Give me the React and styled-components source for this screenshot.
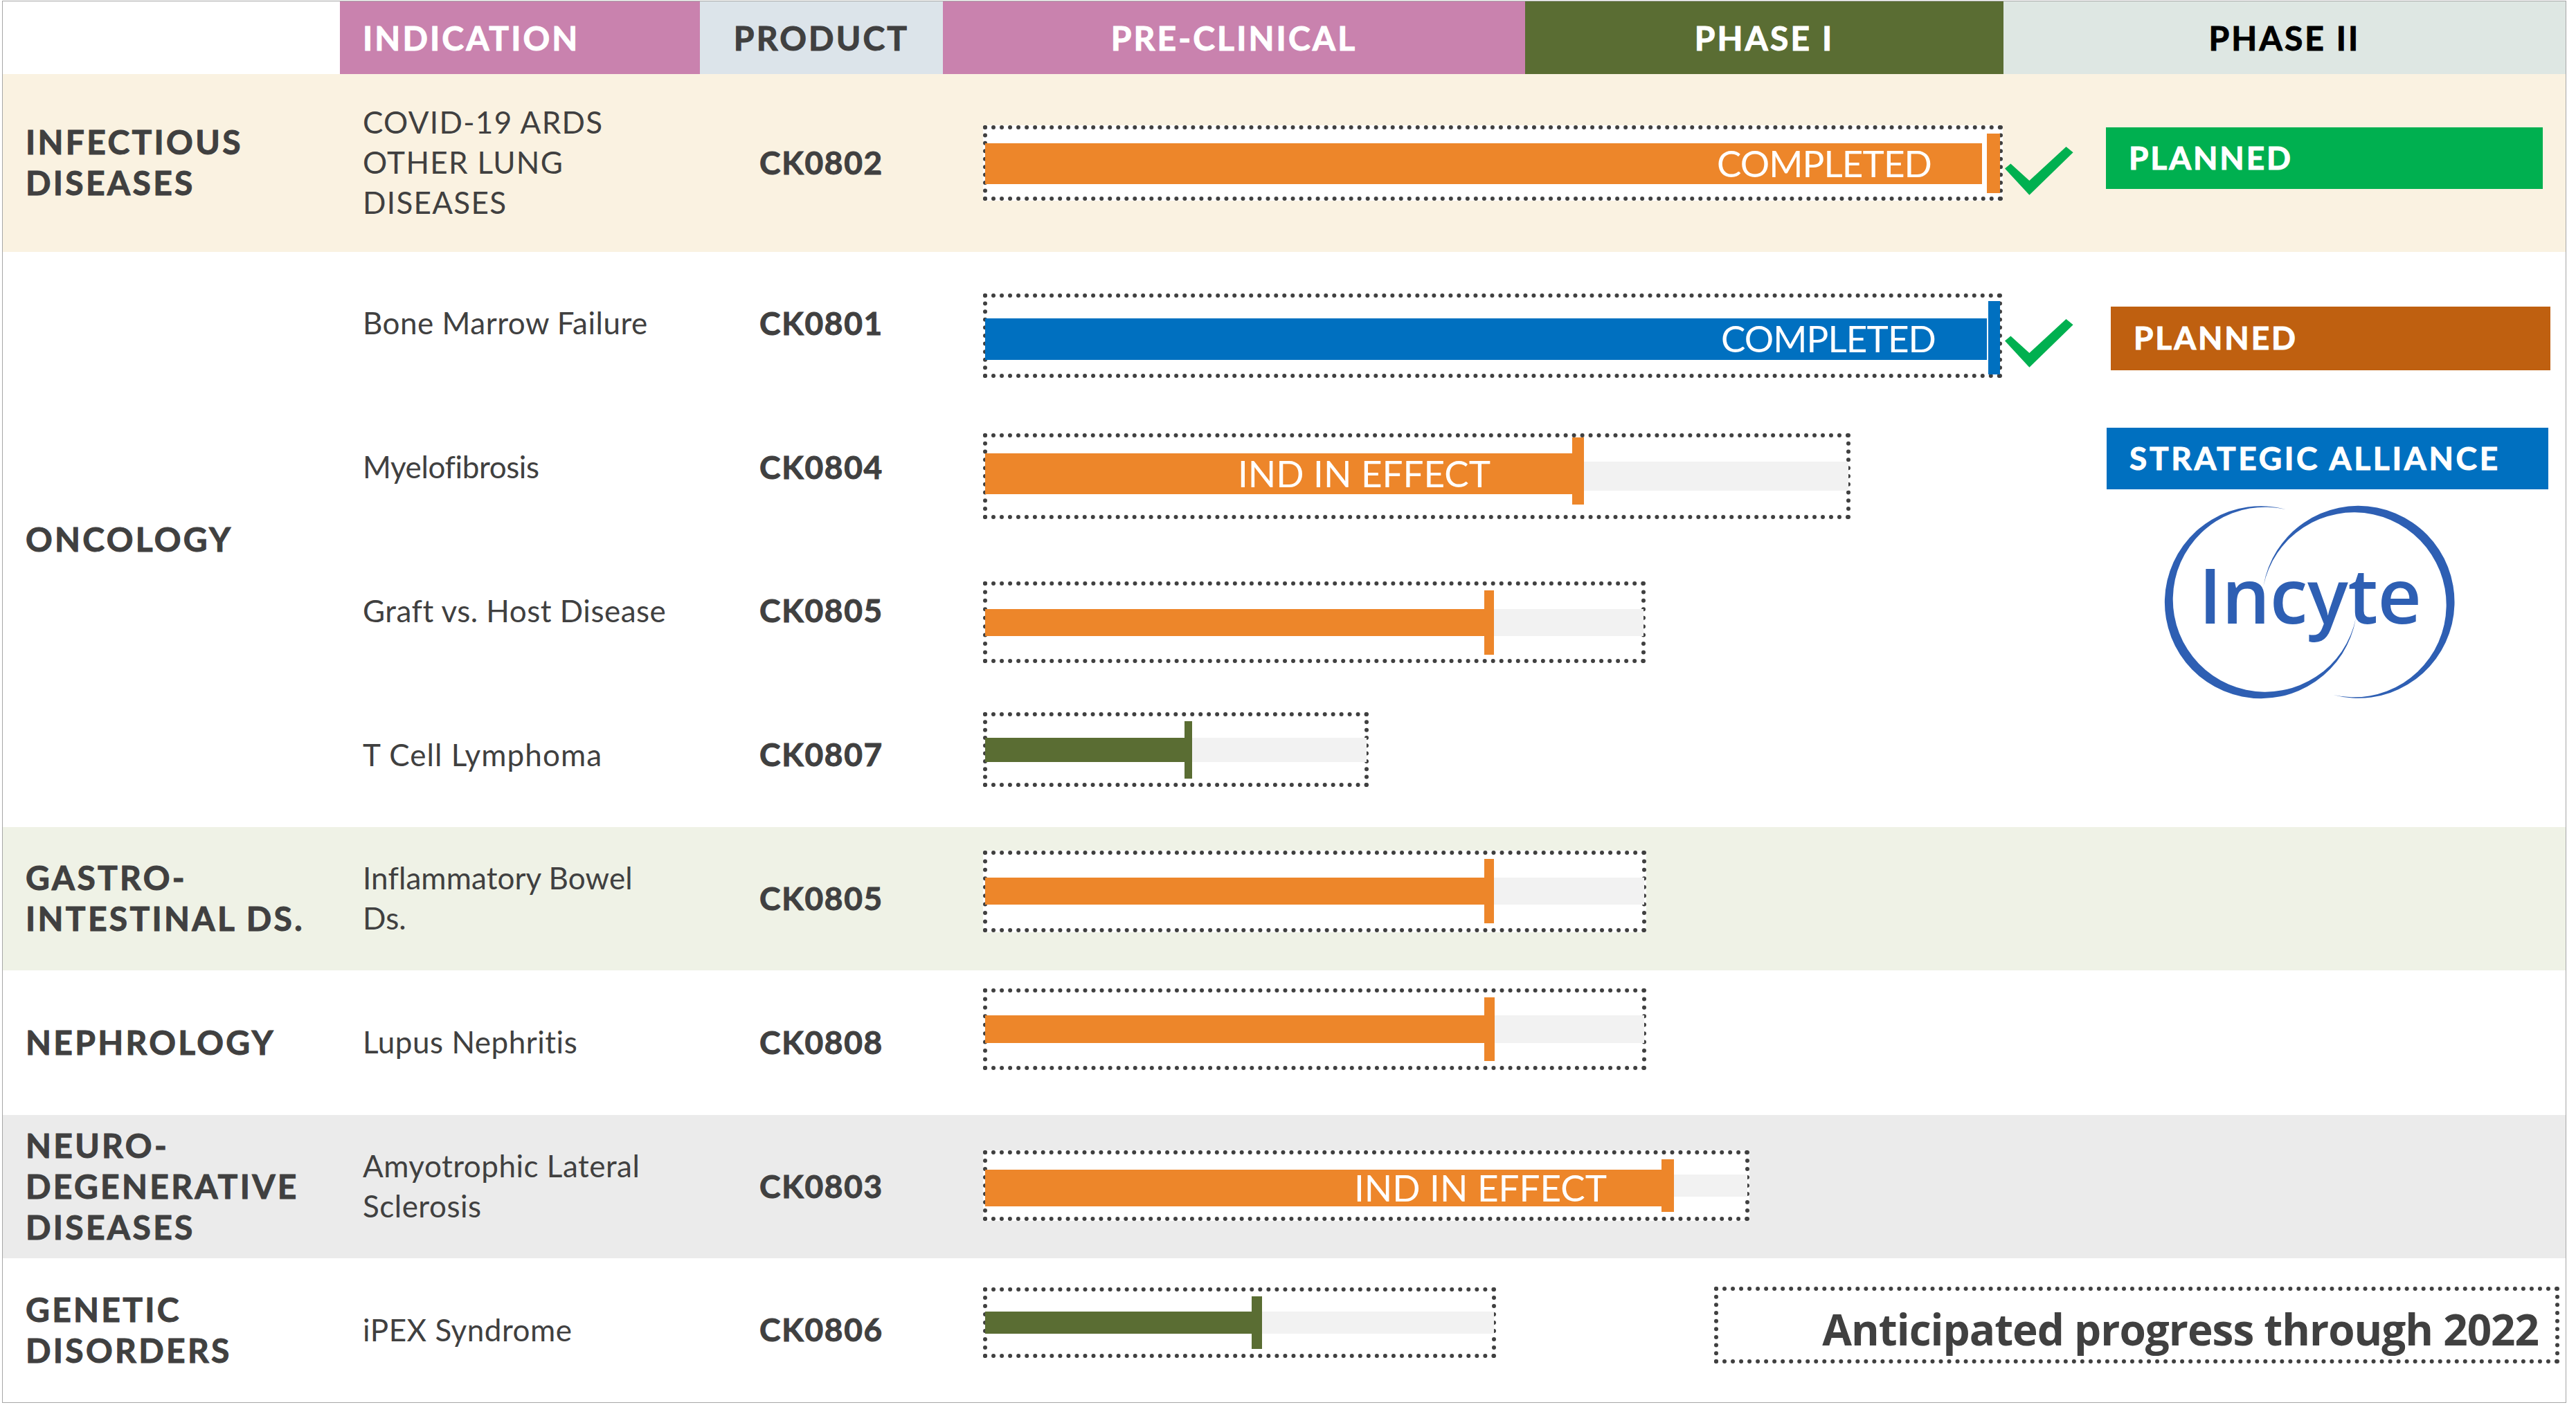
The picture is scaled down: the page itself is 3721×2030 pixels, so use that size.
import React from "react";
import styled, { createGlobalStyle } from "styled-components";

const INK = "#404040";
const ORANGE = "#ed862a";
const BLUE = "#0070c0";
const OLIVE = "#5a6d33";
const GREEN = "#00b050";

const GlobalStyle = createGlobalStyle`
  html, body {
    margin: 0;
    background: #fff;
  }
  body {
    font-family: "Lato", "Liberation Sans", sans-serif;
    color: ${INK};
  }
`;

const COLUMNS = "487px 520px 351px 1532px 812px";

const Frame = styled.div`
  width: 3702px;
  margin: 1px 0 0 3px;
  border: 1px solid #a6a6a6;
`;

const HeaderRow = styled.div`
  display: grid;
  grid-template-columns: 487px 520px 351px 841px 691px 812px;
  height: 105px;
`;

const HeaderCell = styled.div`
  display: flex;
  align-items: center;
  justify-content: ${(p) => (p.$left ? "flex-start" : "center")};
  padding-left: ${(p) => (p.$left ? "33px" : "0")};
  background: ${(p) => p.$bg || "transparent"};
  color: ${(p) => p.$color || "#fff"};
  font-size: 48px;
  font-weight: 700;
  letter-spacing: 3.1px;
  -webkit-text-stroke: 1px currentColor;
`;

const Row = styled.section`
  display: grid;
  grid-template-columns: ${COLUMNS};
  grid-template-rows: repeat(${(p) => p.$lines || 1}, 1fr);
  height: ${(p) => p.$height}px;
  background: ${(p) => p.$bg || "#fff"};
  align-items: center;
`;

const Category = styled.h2`
  margin: 0;
  padding: 0 0 3px 33px;
  grid-row: 1 / -1;
  font-size: 48px;
  line-height: 59px;
  font-weight: 700;
  letter-spacing: 3.3px;
  -webkit-text-stroke: 1px currentColor;
  white-space: nowrap;
`;

const Indication = styled.div`
  padding: 0 0 3px 33px;
  font-size: 44px;
  line-height: 58px;
  letter-spacing: ${(p) => p.$spacing ?? 0.5}px;
`;

const Product = styled.div`
  padding-bottom: 3px;
  text-align: center;
  font-size: 46px;
  font-weight: 700;
  letter-spacing: 1.7px;
  -webkit-text-stroke: 1px currentColor;
`;

const BarCell = styled.div`
  display: flex;
  align-items: center;
  padding-left: 58px;
  grid-column: ${(p) => (p.$wide ? "4 / -1" : "auto")};
`;

const DottedBox = styled.div`
  box-sizing: border-box;
  display: flex;
  align-items: center;
  width: ${(p) => p.$width}px;
  height: ${(p) => p.$height}px;
  margin-top: ${(p) => (p.$shift || 0) * 2}px;
  border: 6px dotted ${INK};
  background: #fff;
`;

const Track = styled.div`
  display: flex;
  align-items: center;
  flex: 1;
  height: ${(p) => p.$height}px;
  margin: 0 -3px;
  background: ${(p) => (p.$bare ? "transparent" : "#f2f2f2")};
`;

const Fill = styled.div`
  display: flex;
  align-items: center;
  justify-content: flex-end;
  flex: none;
  width: ${(p) => p.$width}px;
  height: ${(p) => p.$height}px;
  margin-top: ${(p) => (p.$shift || 0) * 2}px;
  padding: 0 ${(p) => p.$pad || 0}px 2px 0;
  box-sizing: border-box;
  background: ${(p) => p.$color};
  color: #fff;
  font-size: 53px;
  letter-spacing: ${(p) => (p.$tight ? -0.9 : 0)}px;
  white-space: nowrap;
`;

const Tick = styled.div`
  flex: none;
  width: ${(p) => p.$width}px;
  height: ${(p) => p.$height}px;
  margin-left: ${(p) => p.$gap || 0}px;
  margin-top: ${(p) => (p.$shift || 0) * 2}px;
  background: ${(p) => p.$color};
`;

const StatusCell = styled.div`
  display: flex;
  align-items: center;
  padding-left: 2px;
`;

const CheckMark = styled.svg`
  flex: none;
  width: 99px;
  height: 70px;
  margin-top: ${(p) => p.$shift * 2}px;
`;

const Pill = styled.div`
  box-sizing: border-box;
  display: flex;
  align-items: center;
  flex: none;
  width: ${(p) => p.$width}px;
  height: ${(p) => p.$height}px;
  margin-left: ${(p) => p.$gap || 0}px;
  margin-top: ${(p) => (p.$shift || 0) * 2}px;
  padding: 0 0 2px 33px;
  background: ${(p) => p.$bg};
  color: #fff;
  font-size: 46px;
  font-weight: 700;
  letter-spacing: ${(p) => p.$spacing ?? 2.9}px;
  -webkit-text-stroke: 1px currentColor;
  white-space: nowrap;
`;

const AllianceCell = styled.div`
  grid-column: 5;
  grid-row: 2 / span 3;
  align-self: start;
  margin: 46px 0 0 149px;
`;

const LogoMark = styled.svg`
  display: block;
  width: 440px;
  height: 290px;
  margin: 18px 0 0 77px;
`;

const LogoWord = styled.text`
  font-family: "Open Sans", "Liberation Sans", sans-serif;
  font-weight: 600;
  font-size: 110px;
  fill: #2e5fb3;
`;

const NoteBox = styled(DottedBox)`
  justify-content: flex-end;
  padding: 10px 24px 0 0;
  margin-left: 315px;
  font-family: "Open Sans", "Liberation Sans", sans-serif;
  font-size: 62px;
  font-weight: 700;
  letter-spacing: -1px;
  white-space: nowrap;
`;

const Check = ({ shift }) => (
  <CheckMark viewBox="0 0 99 70" $shift={shift}>
    <polygon
      fill={GREEN}
      points="0,31.5 8.4,24.5 35.4,49 88.5,0 98.6,8.2 35.4,69.8"
    />
  </CheckMark>
);

const IncyteLogo = () => (
  <LogoMark viewBox="0 0 440 290">
    <g fill="#2e5fb3">
      <path d="M182 11 A139 139 0 1 0 283 168 A133.5 133.5 0 1 1 182 11 Z" />
      <path
        d="M182 11 A139 139 0 1 0 283 168 A133.5 133.5 0 1 1 182 11 Z"
        transform="rotate(180 216.2 145)"
      />
    </g>
    <LogoWord x="56" y="176" textLength="322" lengthAdjust="spacing">
      Incyte
    </LogoWord>
  </LogoMark>
);

// one dotted progress box; sizes and offsets are taken off the slide
const Bar = ({ box, track, fill, tick, label, pad, tight }) => (
  <DottedBox $width={box[0]} $height={box[1]} $shift={box[2]}>
    <Track $height={track || fill[1]} $bare={!track}>
      <Fill
        $width={fill[0]}
        $height={fill[1]}
        $shift={fill[2]}
        $color={fill[3]}
        $pad={pad}
        $tight={tight}
      >
        {label}
      </Fill>
      <Tick
        $width={tick[0]}
        $height={tick[1]}
        $shift={tick[2]}
        $gap={tick[3]}
        $color={fill[3]}
      />
    </Track>
  </DottedBox>
);

const App = () => (
  <>
    <GlobalStyle />
    <Frame>
      <HeaderRow>
        <HeaderCell />
        <HeaderCell $bg="#c982ae" $left>
          INDICATION
        </HeaderCell>
        <HeaderCell $bg="#dce4ea" $color={INK}>
          PRODUCT
        </HeaderCell>
        <HeaderCell $bg="#c982ae">PRE-CLINICAL</HeaderCell>
        <HeaderCell $bg={OLIVE}>PHASE I</HeaderCell>
        <HeaderCell $bg="#dee7e3" $color="#000">
          PHASE II
        </HeaderCell>
      </HeaderRow>

      <Row $height={257} $bg="#faf2e1">
        <Category>
          INFECTIOUS
          <br />
          DISEASES
        </Category>
        <Indication $spacing={1.3}>
          COVID-19 ARDS
          <br />
          OTHER LUNG
          <br />
          DISEASES
        </Indication>
        <Product>CK0802</Product>
        <BarCell>
          <Bar
            box={[1473, 109, 0]}
            fill={[1440, 59, 1, ORANGE]}
            tick={[19, 86, 0.5, 7]}
            label="COMPLETED"
            pad={73}
            tight
          />
        </BarCell>
        <StatusCell>
          <Check shift={11.5} />
          <Pill $width={631} $height={89} $gap={47} $shift={-7} $bg={GREEN}>
            PLANNED
          </Pill>
        </StatusCell>
      </Row>

      <Row $height={831} $lines={4}>
        <Category>ONCOLOGY</Category>

        <Indication>Bone Marrow Failure</Indication>
        <Product>CK0801</Product>
        <BarCell>
          <Bar
            box={[1472, 122, 17]}
            fill={[1447, 60, 5, BLUE]}
            tick={[17, 106, 3, 2]}
            label="COMPLETED"
            pad={74}
            tight
          />
        </BarCell>
        <StatusCell>
          <Check shift={28} />
          <Pill $width={635} $height={92} $gap={54} $shift={21} $bg="#bf6010">
            PLANNED
          </Pill>
        </StatusCell>

        <Indication $spacing={-0.4}>Myelofibrosis</Indication>
        <Product>CK0804</Product>
        <BarCell>
          <Bar
            box={[1253, 124, 12]}
            track={42}
            fill={[848, 59, -3.5, ORANGE]}
            tick={[17, 97, -7.5]}
            label="IND IN EFFECT"
            pad={118}
          />
        </BarCell>
        <AllianceCell>
          <Pill $width={638} $height={89} $bg={BLUE} $spacing={3.7}>
            STRATEGIC ALLIANCE
          </Pill>
          <IncyteLogo />
        </AllianceCell>

        <Indication>Graft vs. Host Disease</Indication>
        <Product>CK0805</Product>
        <BarCell>
          <Bar
            box={[957, 118, 16]}
            track={39}
            fill={[721, 39, 0, ORANGE]}
            tick={[14, 93, 0]}
          />
        </BarCell>

        <Indication $spacing={1.1}>T Cell Lymphoma</Indication>
        <Product>CK0807</Product>
        <BarCell>
          <Bar
            box={[557, 108, -8]}
            track={35}
            fill={[288, 35, 0, OLIVE]}
            tick={[11, 83, 0]}
          />
        </BarCell>
      </Row>

      <Row $height={207} $bg="#eff2e6">
        <Category>
          GASTRO-
          <br />
          INTESTINAL DS.
        </Category>
        <Indication $spacing={0.1}>
          Inflammatory Bowel
          <br />
          Ds.
        </Indication>
        <Product>CK0805</Product>
        <BarCell>
          <Bar
            box={[958, 118, -11]}
            track={39}
            fill={[721, 39, 0, ORANGE]}
            tick={[14, 93, 0]}
          />
        </BarCell>
      </Row>

      <Row $height={209}>
        <Category>NEPHROLOGY</Category>
        <Indication>Lupus Nephritis</Indication>
        <Product>CK0808</Product>
        <BarCell>
          <Bar
            box={[958, 118, -19.5]}
            track={40}
            fill={[721, 40, 0, ORANGE]}
            tick={[15, 92, 0]}
          />
        </BarCell>
      </Row>

      <Row $height={207} $bg="#ebebeb">
        <Category>
          NEURO-
          <br />
          DEGENERATIVE
          <br />
          DISEASES
        </Category>
        <Indication>
          Amyotrophic Lateral
          <br />
          Sclerosis
        </Indication>
        <Product>CK0803</Product>
        <BarCell>
          <Bar
            box={[1107, 102, -1.5]}
            track={32}
            fill={[977, 53, 3.5, ORANGE]}
            tick={[18, 76, 0]}
            label="IND IN EFFECT"
            pad={79}
          />
        </BarCell>
      </Row>

      <Row $height={208}>
        <Category>
          GENETIC
          <br />
          DISORDERS
        </Category>
        <Indication>iPEX Syndrome</Indication>
        <Product>CK0806</Product>
        <BarCell $wide>
          <Bar
            box={[741, 102, -11]}
            track={32}
            fill={[385, 32, 0, OLIVE]}
            tick={[15, 76, 0]}
          />
          <NoteBox $width={1221} $height={111} $shift={-7.5}>
            Anticipated progress through 2022
          </NoteBox>
        </BarCell>
      </Row>
    </Frame>
  </>
);

export default App;
